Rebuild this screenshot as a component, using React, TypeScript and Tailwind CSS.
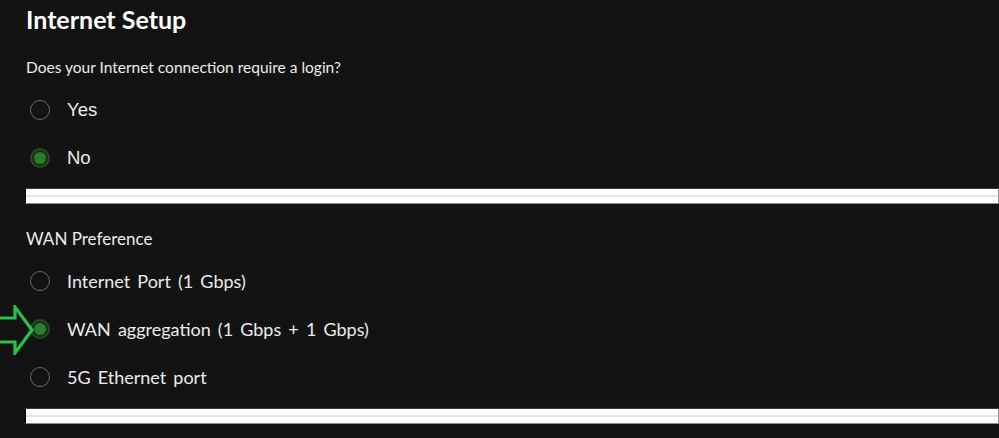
const loginOptions = [
  { id: 'yes', label: 'Yes', checked: false },
  { id: 'no', label: 'No', checked: true },
];

const wanOptions = [
  { id: 'port', label: 'Internet Port (1 Gbps)', checked: false },
  { id: 'agg', label: 'WAN aggregation (1 Gbps + 1 Gbps)', checked: true },
  { id: '5g', label: '5G Ethernet port', checked: false },
];

function Radio({ checked }: { checked: boolean }) {
  if (checked) {
    return (
      <span className="ml-[4px] flex h-[20px] w-[20px] shrink-0 items-center justify-center rounded-full border-[2px] border-[#1f4d1f] bg-[#163316]">
        <span className="h-[12px] w-[12px] rounded-full bg-[#2a7d2a]" />
      </span>
    );
  }
  return <span className="ml-[4px] h-[20px] w-[20px] shrink-0 rounded-full border-[1.5px] border-[#6a6a6a]" />;
}

function Divider() {
  return (
    <div className="ml-[-1px] flex h-[16px] flex-col justify-center border border-[#8c8c8c] border-t-[#3a3a3a] border-l-[#050505] bg-white">
      <div className="h-[2px] bg-[#e2e6e4]" />
    </div>
  );
}

function Arrow() {
  return (
    <svg className="absolute left-0 top-[305px]" width="36" height="50" viewBox="0 0 36 50">
      <path
        d="M-4 13 H15 V2 L32 25 L15 48 V37 H-4"
        fill="none"
        stroke="#27c24a"
        strokeWidth="3.2"
        strokeLinejoin="miter"
      />
    </svg>
  );
}

export default function App() {
  return (
    <div className="relative h-[438px] w-[999px] overflow-hidden bg-[#131313] pl-[26px] font-['Lato',sans-serif] text-[#ececec]">
      <h1 className="mt-[4px] h-[30px] text-[25px] font-bold leading-[30px] text-white">Internet Setup</h1>
      <p className="mt-[23px] h-[20px] text-[15.5px] leading-[20px]">Does your Internet connection require a login?</p>

      <div className="mt-[9px]">
        {loginOptions.map(o => (
          <div key={o.id} className="flex h-[48px] items-center gap-[17px]">
            <Radio checked={o.checked} />
            <span className="font-['Liberation_Sans',sans-serif] text-[18.5px]">{o.label}</span>
          </div>
        ))}
      </div>

      <div className="mt-[6px]">
        <Divider />
      </div>

      <p className="mt-[25px] h-[20px] text-[17px] leading-[20px]">WAN Preference</p>

      <div className="mt-[8px]">
        {wanOptions.map(o => (
          <div key={o.id} className="flex h-[48px] items-center gap-[17px]">
            <Radio checked={o.checked} />
            <span className="text-[18px] [word-spacing:2.5px]">{o.label}</span>
          </div>
        ))}
      </div>

      <div className="mt-[7px]">
        <Divider />
      </div>

      <Arrow />
    </div>
  );
}
